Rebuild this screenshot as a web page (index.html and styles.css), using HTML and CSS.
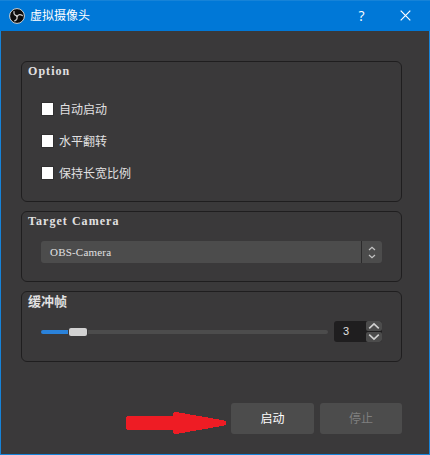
FILE: index.html
```html
<!DOCTYPE html>
<html lang="zh-CN">
<head>
<meta charset="utf-8">
<title>虚拟摄像头</title>
<link rel="stylesheet" href="styles.css">
</head>
<body>
<div class="window">
  <header class="titlebar">
    <svg class="logo" width="16" height="16" viewBox="0 0 16 16">
      <circle cx="8" cy="8" r="7.4" fill="#0c0c0c" stroke="#d0d3d6" stroke-width="1"/>
      <g fill="none" stroke="#c8c8c8" stroke-width="1.3" stroke-linecap="round">
        <path id="blade" d="M8.2 7.6C6 7.8 4.6 6 5 3.6"/>
        <use href="#blade" transform="rotate(120 8 8)"/>
        <use href="#blade" transform="rotate(240 8 8)"/>
      </g>
    </svg>
    <h1>虚拟摄像头</h1>
    <button class="help">?</button>
    <button class="close" aria-label="关闭"><svg width="11" height="11" viewBox="0 0 11 11"><path d="M.7.7l9.6 9.6M10.3.7L.7 10.3" stroke="#fff" stroke-width="1.2"/></svg></button>
  </header>
  <main>
    <section class="group options">
      <h2>Option</h2>
      <label><i class="check"></i><span>自动启动</span></label>
      <label><i class="check"></i><span>水平翻转</span></label>
      <label><i class="check"></i><span>保持长宽比例</span></label>
    </section>
    <section class="group camera">
      <h2 class="wide">Target Camera</h2>
      <div class="select">
        <span class="value">OBS-Camera</span>
        <span class="arrows"><svg width="8" height="13" viewBox="0 0 8 13"><path d="M1 4L4 1.2 7 4M1 9l3 2.8L7 9" fill="none" stroke="#c4c4c4" stroke-width="1.2"/></svg></span>
      </div>
    </section>
    <section class="group buffer">
      <h2 class="cjk">缓冲帧</h2>
      <div class="row">
        <div class="slider"><span class="fill"></span><span class="thumb"></span><span class="rest"></span></div>
        <div class="spin">
          <span class="number">3</span>
          <span class="steps">
            <svg width="16" height="10" viewBox="0 0 16 10"><path d="M3.2 7.3L8 2.8l4.8 4.5" fill="none" stroke="#d0d0d0" stroke-width="1.6"/></svg>
            <svg width="16" height="10" viewBox="0 0 16 10"><path d="M3.2 2.7L8 7.2l4.8-4.5" fill="none" stroke="#d0d0d0" stroke-width="1.6"/></svg>
          </span>
        </div>
      </div>
    </section>
    <footer>
      <svg class="pointer" width="100" height="22" viewBox="0 0 100 22" shape-rendering="crispEdges"><path d="M1 4H47V1h1V0h5v1h6v1h5v1h6v1h6v1h6v1h5v1h6v1h5v1h2v1h1v2h-1v1h-2v1h-5v1h-6v1h-5v1h-6v1h-6v1h-6v1h-5v1h-6v1h-5v-1h-1v-3H1v-1H0V5h1z" fill="#ee1c24"/></svg>
      <button class="btn start">启动</button>
      <button class="btn stop" disabled>停止</button>
    </footer>
  </main>
</div>
</body>
</html>
```

FILE: styles.css
```css
* { box-sizing: border-box; }
body { margin: 0; font: 12px/16px "Liberation Sans", "Noto Sans CJK SC", sans-serif; color: #e1e0e1; }
button { border: 0; padding: 0; margin: 0; font: inherit; color: inherit; background: none; }
.window { width: 430px; height: 455px; background: #3a393a; border: 1px solid #1683d8; border-top: 0; display: flex; flex-direction: column; }
.titlebar { height: 31px; margin: 0 -1px; padding-left: 9px; background: #0078d7; border-top: 1px solid #1683d8; display: flex; align-items: center; color: #fff; flex: none; }
.logo { flex: none; margin-top: -1px; }
h1 { flex: 1; margin: 0 0 0 5px; font-size: 12px; line-height: 16px; font-weight: 400; }
.help { width: 45px; height: 30px; font: 14px/28px "Open Sans", sans-serif; }
.close { width: 46px; height: 30px; display: flex; align-items: center; justify-content: center; padding: 0 3px 2px 0; }
main { padding: 30px 27px 0 20px; }
.group { width: 381px; border: 1px solid #1f1e1f; border-radius: 6px; padding: 0 19px; margin-bottom: 9px; }
.options { height: 141px; }
.camera, .buffer { height: 71px; }
h2 { margin: 1px 0 0 -13px; height: 17px; font: 700 12px/17px "Liberation Serif", serif; letter-spacing: 1.05px; white-space: nowrap; }
h2.wide { letter-spacing: 1.05px; }
h2.cjk { font: 700 13px/15px "Noto Sans CJK SC", sans-serif; letter-spacing: 0; }
label { display: flex; align-items: center; height: 32px; }
h2 + label { margin-top: 13px; }
label span { padding-top: 2px; }
.check { width: 11px; height: 12px; background: #fff; margin: 0 6px 0 1px; box-shadow: 0 0 0 1px #302f30; }
.select { width: 341px; height: 22px; margin-top: 11px; display: flex; background: #4c4c4c; border-radius: 3px; }
.value { flex: 1; padding-left: 9px; font: 11px/23px "Liberation Serif", serif; letter-spacing: .2px; }
.arrows { width: 21px; border-left: 1px solid #2b2a2b; display: flex; align-items: center; justify-content: center; padding-top: 1px; }
.row { display: flex; margin-top: 11px; align-items: center; width: 341px; }
.slider { width: 287px; height: 8px; display: flex; align-items: center; margin-right: 6px; }
.fill { width: 27px; height: 4px; border-radius: 2px 0 0 2px; background: #2a82da; }
.thumb { width: 18px; height: 8px; margin: 0 1px; border-radius: 2px; background: #d2d2d2; }
.rest { flex: 1; height: 4px; border-radius: 0 2px 2px 0; background: #4c4c4c; }
.spin { width: 48px; height: 21px; display: flex; background: #1f1e1f; border-radius: 3px; overflow: hidden; }
.number { width: 32px; padding-left: 9px; font-size: 11px; line-height: 21px; }
.steps { display: flex; flex-direction: column; gap: 1px; }
.steps svg { display: block; background: #4c4c4c; border-radius: 2px; }
footer { display: flex; margin-top: 41px; padding-left: 105px; height: 31px; }
.pointer { margin: 9px 5px 0 0; flex: none; }
.btn { width: 83px; height: 31px; padding-top: 1px; background: #4c4c4c; border-radius: 3px; flex: none; }
.start { color: #fff; }
.stop { width: 82px; margin-left: 6px; color: #7f7f7f; }
```
